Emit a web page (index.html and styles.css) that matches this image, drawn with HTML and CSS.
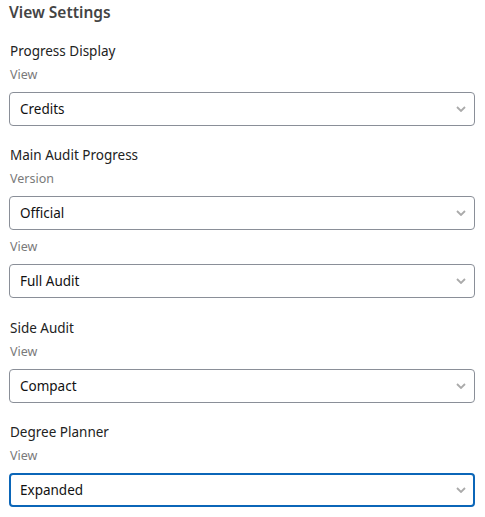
FILE: index.html
```html
<!DOCTYPE html>
<html lang="en">
<head>
  <meta charset="UTF-8" />
  <meta name="viewport" content="width=device-width, initial-scale=1.0" />
  <title>View Settings</title>
  <link rel="stylesheet" href="styles.css">
</head>
<body>
  <div id="settings">
    <h2 class="title">View Settings</h2>

    <div class="section">
      <h3>Progress Display</h3>
      <div class="field">
        <label>View</label>
        <div class="select"><span>Credits</span><svg class="chevron" viewBox="0 0 10 6"><path d="M1 1 L5 5 L9 1" /></svg></div>
      </div>
    </div>

    <div class="section">
      <h3>Main Audit Progress</h3>
      <div class="field">
        <label>Version</label>
        <div class="select"><span>Official</span><svg class="chevron" viewBox="0 0 10 6"><path d="M1 1 L5 5 L9 1" /></svg></div>
      </div>
      <div class="field">
        <label>View</label>
        <div class="select"><span>Full Audit</span><svg class="chevron" viewBox="0 0 10 6"><path d="M1 1 L5 5 L9 1" /></svg></div>
      </div>
    </div>

    <div class="section">
      <h3>Side Audit</h3>
      <div class="field">
        <label>View</label>
        <div class="select"><span>Compact</span><svg class="chevron" viewBox="0 0 10 6"><path d="M1 1 L5 5 L9 1" /></svg></div>
      </div>
    </div>

    <div class="section">
      <h3>Degree Planner</h3>
      <div class="field">
        <label>View</label>
        <div class="select focused"><span>Expanded</span><svg class="chevron" viewBox="0 0 10 6"><path d="M1 1 L5 5 L9 1" /></svg></div>
      </div>
    </div>
  </div>
</body>
</html>
```

FILE: styles.css
```css
* {
  box-sizing: border-box;
}

body {
  margin: 0;
  padding: 0;
  font-family: "Noto Sans", Arial, sans-serif;
  color: #222;
  background: #fff;
}

#settings {
  width: 475px;
  padding-left: 9px;
}

.title {
  margin: 0;
  font-size: 15.5px;
  font-weight: 600;
  line-height: 24px;
  color: #444;
}

.section {
  margin-top: 17px;
}

.section + .section {
  margin-top: 19px;
}

.section:nth-child(4) {
  margin-top: 20px;
}

.section h3 {
  margin: 0;
  padding-left: 1px;
  font-size: 13.5px;
  font-weight: 400;
  line-height: 20px;
  color: #222;
}

.field label {
  display: block;
  margin-top: 6px;
  margin-bottom: 9px;
  padding-left: 1px;
  font-size: 12.5px;
  line-height: 16px;
  color: #7a7a7a;
}

.field + .field label {
  margin-top: 9px;
}

.select {
  display: flex;
  align-items: center;
  justify-content: space-between;
  height: 34px;
  padding: 0 8px 0 10px;
  border: 1px solid #8a8f98;
  border-radius: 4px;
  font-size: 13.5px;
  color: #111;
}

.select.focused {
  border: 2px solid #0b66b8;
  padding-left: 9px;
  padding-right: 7px;
}

.chevron {
  width: 10px;
  height: 6px;
  fill: none;
  stroke: #aaa;
  stroke-width: 1.8;
}
```
